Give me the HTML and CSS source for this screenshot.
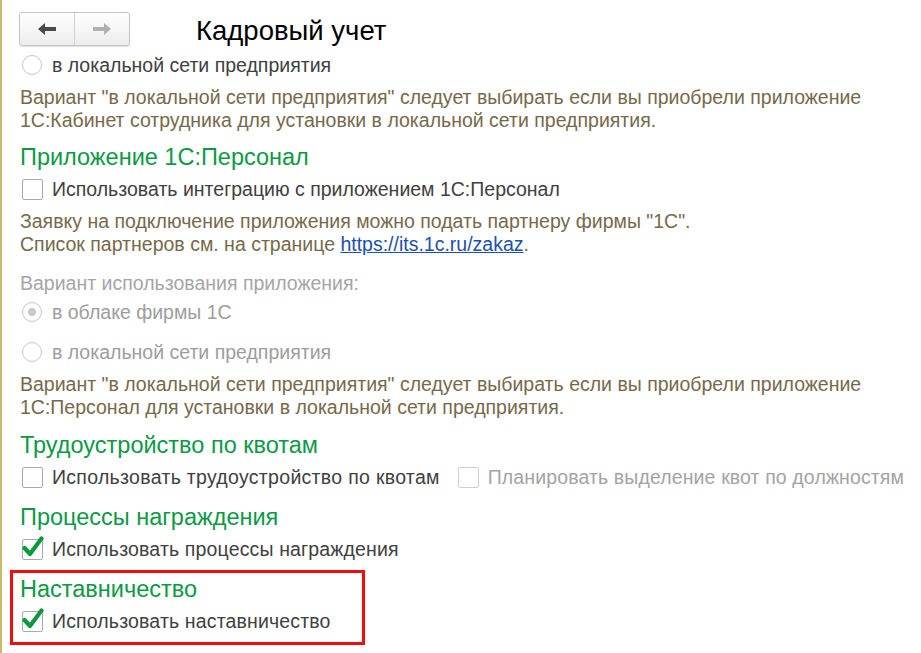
FILE: index.html
```html
<!DOCTYPE html>
<html lang="ru">
<head>
<meta charset="utf-8">
<link rel="stylesheet" href="styles.css">
</head>
<body>
<div class="page">
  <div class="header">
    <div class="nav">
      <button class="nav-btn back"><svg width="20" height="14" viewBox="0 0 20 14"><path d="M1 7 L8 1 L8 5 L19 5 L19 9 L8 9 L8 13 Z" fill="#4a4a4a"/></svg></button>
      <button class="nav-btn fwd"><svg width="20" height="14" viewBox="0 0 20 14"><path d="M19 7 L12 1 L12 5 L1 5 L1 9 L12 9 L12 13 Z" fill="#b0b0b0"/></svg></button>
    </div>
    <div class="title">Кадровый учет</div>
  </div>

  <div class="row r-first"><span class="radio"></span><span class="label">в локальной сети предприятия</span></div>
  <p class="desc">Вариант "в локальной сети предприятия" следует выбирать если вы приобрели приложение<br>1С:Кабинет сотрудника для установки в локальной сети предприятия.</p>

  <h2 class="heading h-a">Приложение 1С:Персонал</h2>
  <div class="row"><span class="check"></span><span class="label">Использовать интеграцию с приложением 1С:Персонал</span></div>
  <p class="desc">Заявку на подключение приложения можно подать партнеру фирмы "1С".<br>Список партнеров см. на странице <a href="#">https://its.1c.ru/zakaz</a>.</p>

  <div class="glabel">Вариант использования приложения:</div>
  <div class="row disabled"><span class="radio on"></span><span class="label">в облаке фирмы 1С</span></div>
  <div class="row disabled r-r2"><span class="radio"></span><span class="label">в локальной сети предприятия</span></div>
  <p class="desc">Вариант "в локальной сети предприятия" следует выбирать если вы приобрели приложение<br>1С:Персонал для установки в локальной сети предприятия.</p>

  <h2 class="heading h-b">Трудоустройство по квотам</h2>
  <div class="row"><span class="check"></span><span class="label wide">Использовать трудоустройство по квотам</span><span class="check dis second"></span><span class="label dlabel">Планировать выделение квот по должностям</span></div>

  <h2 class="heading h-c">Процессы награждения</h2>
  <div class="row"><span class="check"><svg class="tick" width="24" height="22" viewBox="0 0 24 22"><path d="M3.5 12 L9 18 L20.5 2.5" fill="none" stroke="#0a9a3c" stroke-width="4.2" stroke-linecap="round" stroke-linejoin="round"/></svg></span><span class="label semi">Использовать процессы награждения</span></div>

  <div class="highlight">
    <h2 class="heading">Наставничество</h2>
    <div class="row"><span class="check"><svg class="tick" width="24" height="22" viewBox="0 0 24 22"><path d="M3.5 12 L9 18 L20.5 2.5" fill="none" stroke="#0a9a3c" stroke-width="4.2" stroke-linecap="round" stroke-linejoin="round"/></svg></span><span class="label semi">Использовать наставничество</span></div>
  </div>
</div>
</body>
</html>
```

FILE: styles.css
```css
* { box-sizing: border-box; }
html, body { margin: 0; padding: 0; background: #fff; }
body {
  font-family: "Liberation Sans", Arial, sans-serif;
  font-size: 19.5px;
  color: #404040;
  width: 921px;
  height: 653px;
  overflow: hidden;
}
.page {
  border-left: 2px solid #cdb86e;
  height: 653px;
  padding-left: 18px;
}
.header {
  display: flex;
  align-items: flex-start;
  height: 52px;
  padding-top: 12px;
}
.nav {
  display: flex;
  width: 111px;
  height: 34px;
  margin-left: -1px;
  border: 1px solid #c4c4c4;
  border-radius: 3px;
  background: linear-gradient(#ffffff, #ececec);
  box-shadow: 0 1px 1px rgba(0,0,0,0.12);
}
.nav-btn {
  flex: 1;
  border: 0;
  background: transparent;
  padding: 0;
  display: flex;
  align-items: center;
  justify-content: center;
}
.nav-btn.back { border-right: 1px solid #d0d0d0; }
.title {
  margin-left: 66px;
  font-size: 27.5px;
  color: #000;
  line-height: 38px;
}
.row {
  display: flex;
  align-items: center;
  height: 22px;
  margin: 7px 0 0;
}
.r-first { margin-top: 2px; }
.r-r2 { margin-top: 18px; }
.radio {
  width: 20px;
  height: 20px;
  border-radius: 50%;
  border: 1px solid #c6c6c6;
  margin-left: 2px;
  margin-right: 10px;
  display: flex;
  align-items: center;
  justify-content: center;
  background: #fff;
  flex: none;
}
.radio.on::after {
  content: "";
  width: 8px;
  height: 8px;
  border-radius: 50%;
  background: #c8c8c8;
}
.check {
  position: relative;
  width: 21px;
  height: 21px;
  border: 1px solid #a9a9a9;
  border-radius: 2px;
  margin-left: 2px;
  margin-right: 9px;
  background: #fff;
  flex: none;
}
.check.dis { border-color: #cfcfcf; }
.check.second { margin-left: 18px; }
.tick { position: absolute; left: -2px; top: -4px; }
.label { line-height: 22px; white-space: nowrap; }
.label.wide { letter-spacing: 0.3px; }
.label.semi { letter-spacing: 0.15px; }
.dlabel { color: #a3a3a3; letter-spacing: 0.12px; }
.disabled .label { color: #9d9d9d; }
.desc {
  margin: 10px 0 0;
  line-height: 23px;
  color: #76694a;
  white-space: nowrap;
}
.desc a { color: #1c4fae; }
.heading {
  margin: 11px 0 0;
  font-weight: normal;
  font-size: 23.5px;
  line-height: 28px;
  color: #0a9a44;
}
.h-b { margin-top: 12px; }
.h-c { margin-top: 15px; }
.glabel {
  margin-top: 16px;
  height: 22px;
  line-height: 22px;
  color: #a5a5a5;
}
.highlight {
  margin-top: 10px;
  margin-left: -10px;
  width: 355px;
  height: 75px;
  border: 3px solid #f20d0d;
  padding-left: 7px;
}
.highlight .heading { margin-top: 2px; }
.highlight .row { margin-top: 7px; }
```
